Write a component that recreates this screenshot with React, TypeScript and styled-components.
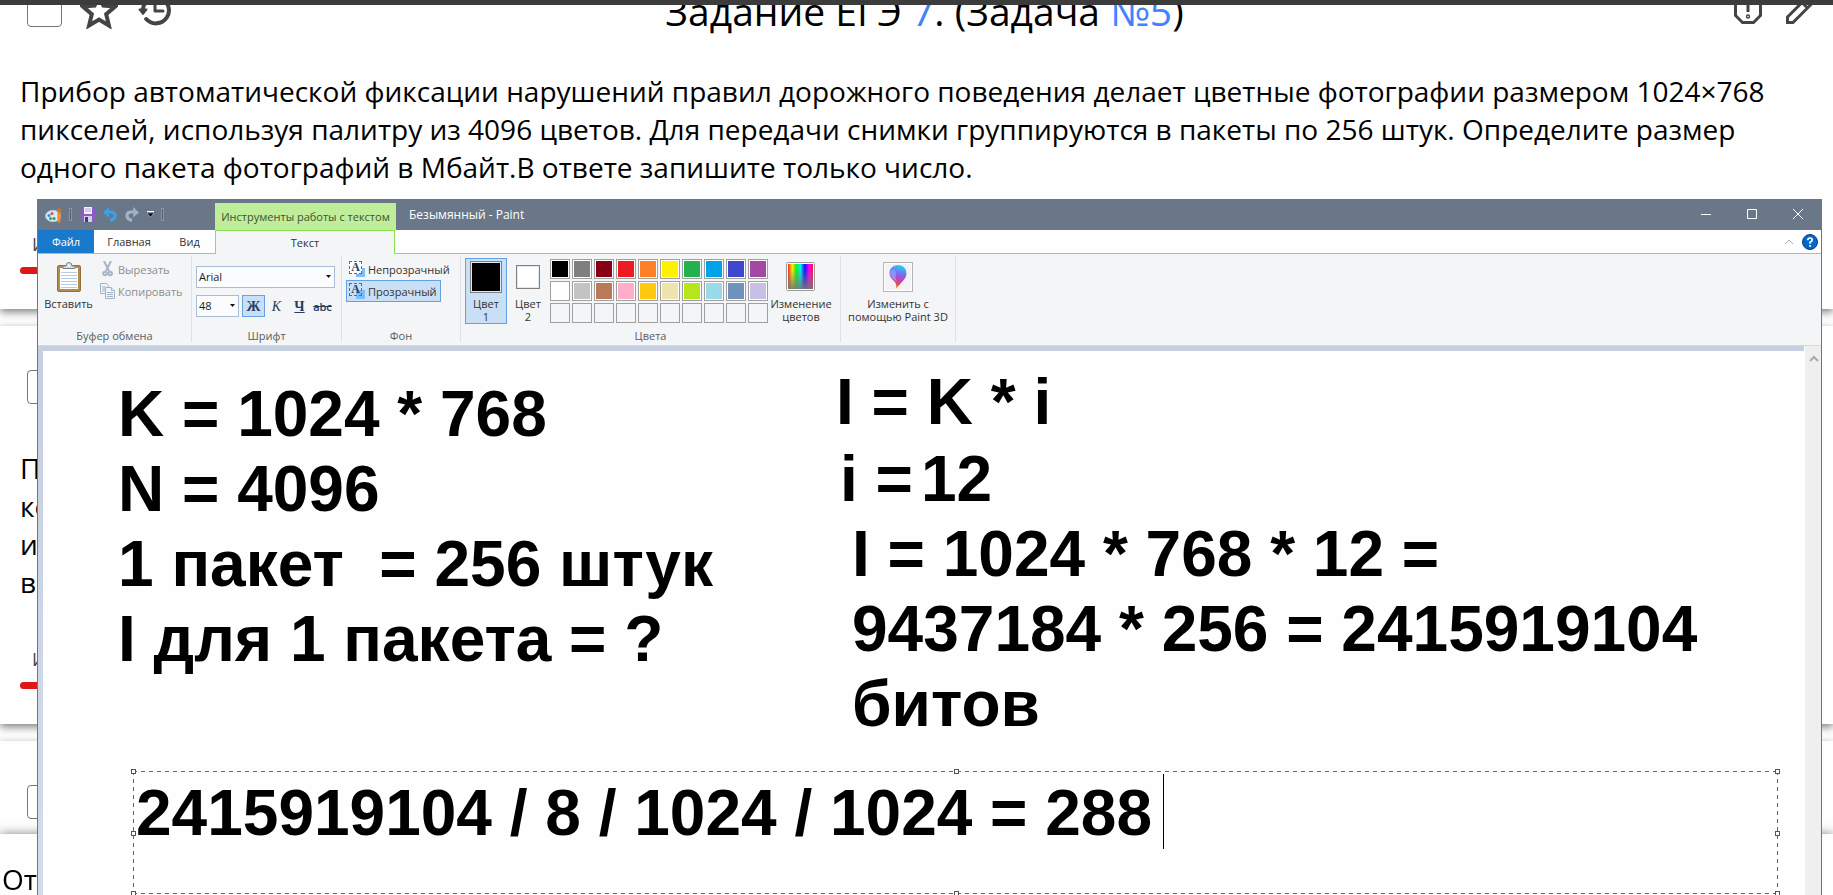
import React from "react";
import styled, { createGlobalStyle, css } from "styled-components";

const ui = `"Open Sans", "Noto Sans", sans-serif`;

const GlobalStyle = createGlobalStyle`
  * { box-sizing: border-box; }
  body { margin: 0; background: #fefefe; color: #000; font-family: ${ui}; }
  button { font: inherit; color: inherit; background: none; border: 0; padding: 0; margin: 0; }
  a { color: #4083ff; text-decoration: none; }
`;

/* ---------- exam page behind the window ---------- */

const Page = styled.main`
  position: relative;
  height: 100vh;
  overflow: hidden;
`;

const TopEdge = styled.div`
  position: fixed;
  inset: 0 0 auto 0;
  height: 5px;
  background: #3c3c3c;
`;

const Feed = styled.div`
  display: flex;
  flex-direction: column;
  gap: 17px;
  margin-top: -51px;
`;

const Card = styled.article`
  padding: 35px 20px;
  background: #fefefe;
  box-shadow: 0 3px 8px rgba(0, 0, 0, 0.5);
`;

const CardHeader = styled.header`
  display: grid;
  grid-template-columns: 1fr auto 1fr;
  align-items: center;
  height: 52px;
  color: #444;
`;

const HeaderTools = styled.div<{ $end?: boolean }>`
  display: flex;
  align-items: center;
  gap: ${(p) => (p.$end ? 20 : 18)}px;
  padding-left: 7px;
  justify-content: ${(p) => (p.$end ? "flex-end" : "flex-start")};
`;

const Check = styled.input`
  appearance: none;
  width: 35px;
  height: 34px;
  margin: 0;
  border: 1px solid #767676;
  border-radius: 4px;
  background: #fff;
`;

const IconButton = styled.button`
  display: flex;
`;

const Title = styled.h1`
  margin: 0;
  padding: 2px 0 0 16px;
  font-size: 39px;
  line-height: 48px;
  font-weight: 400;
  color: #000;
`;

const Question = styled.p`
  margin: 36px 0 46px;
  font-size: 28px;
  line-height: 38px;
`;

const Line = styled.span`
  display: block;
`;

const CardTab = styled.div`
  padding-left: 12px;
  font-size: 18px;
  line-height: 24px;
  font-weight: 500;
  color: #444;
`;

const RedBar = styled.div`
  width: 200px;
  height: 7px;
  margin-top: 11px;
  border-radius: 4px;
  background: #e01717;
`;

const AnswerBar = styled.footer`
  position: fixed;
  inset: auto 0 0 0;
  height: 61px;
  padding: 26px 2px 0;
  background: #fefefe;
  box-shadow: 0 0 10px rgba(0, 0, 0, 0.5);
  font-size: 28px;
  line-height: 38px;
`;

/* ---------- Paint window ---------- */

const Window = styled.section`
  position: fixed;
  inset: 199px 11px 0 37px;
  display: flex;
  flex-direction: column;
  border: 1px solid #697789;
  border-width: 0 1px;
  font-size: 11px;
  line-height: 13px;
  color: #333;
  background: #fefefe;
`;

const TitleBar = styled.div`
  display: flex;
  height: 31px;
  background: #697789;
  color: #fff;
`;

const QuickAccess = styled.div`
  display: flex;
  align-items: center;
  width: 177px;
  padding-left: 7px;
`;

const ContextTab = styled.div`
  display: flex;
  align-items: center;
  justify-content: center;
  width: 181px;
  margin-top: 4px;
  background: #bfed9a;
  color: #3d5230;
  white-space: nowrap;
`;

const Caption = styled.div`
  flex: 1;
  padding: 9px 0 0 13px;
  font-size: 12px;
`;

const WindowButton = styled.button`
  display: flex;
  align-items: center;
  justify-content: center;
  width: 46px;
  height: 30px;
`;

const Tabs = styled.div`
  display: flex;
  height: 24px;
  background: #fefefe;
`;

const Tab = styled.button<{ $w: number; $kind?: "file" | "active" }>`
  width: ${(p) => p.$w}px;
  border-bottom: 1px solid #86e34f;
  ${(p) =>
    p.$kind === "file" &&
    css`
      background: #1979ca;
      color: #fff;
    `}
  ${(p) =>
    p.$kind === "active" &&
    css`
      background: #f4f5f7;
      border: 1px solid #86e34f;
      border-bottom: 0;
    `}
`;

const TabsRest = styled.div`
  flex: 1;
  display: flex;
  align-items: center;
  justify-content: flex-end;
  gap: 8px;
  padding-right: 3px;
  border-bottom: 1px solid #86e34f;
`;

const Ribbon = styled.div`
  display: flex;
  height: 92px;
  padding: 2px 0 3px;
  background: #f4f5f7;
  border-bottom: 1px solid #d6d9dc;
`;

const Group = styled.div<{ $w: number }>`
  display: flex;
  flex-direction: column;
  width: ${(p) => p.$w}px;
  border-right: 1px solid #dfe1e4;
`;

const GroupBody = styled.div<{ $left?: number }>`
  display: flex;
  height: 73px;
  padding-left: ${(p) => p.$left ?? 0}px;
`;

const GroupLabel = styled.div`
  text-align: center;
  color: #5c5c5c;
`;

const BigButton = styled.button<{ $w: number }>`
  display: flex;
  flex-direction: column;
  align-items: center;
  gap: 5px;
  width: ${(p) => p.$w}px;
  padding-top: 6px;
  white-space: pre-line;
`;

const Rows = styled.div<{ $gap?: number; $top: number }>`
  display: flex;
  flex-direction: column;
  align-items: flex-start;
  gap: ${(p) => p.$gap ?? 0}px;
  padding-top: ${(p) => p.$top}px;
`;

const RowButton = styled.button<{ $muted?: boolean; $on?: boolean }>`
  display: flex;
  align-items: center;
  gap: 3px;
  height: 22px;
  padding: 0 3px 0 2px;
  border: 1px solid ${(p) => (p.$on ? "#62a2e4" : "transparent")};
  background: ${(p) => (p.$on ? "#c9dff5" : "transparent")};
  color: ${(p) => (p.$muted ? "#8d8d8d" : "#333")};
`;

const Row = styled.div`
  display: flex;
`;

const SelectBox = styled.label<{ $w: number }>`
  position: relative;
  width: ${(p) => p.$w}px;
  height: 22px;
  margin-right: 3px;
  svg {
    position: absolute;
    right: 4px;
    top: 9px;
    pointer-events: none;
  }
`;

const Select = styled.select`
  appearance: none;
  width: 100%;
  height: 100%;
  padding: 0 2px;
  border: 1px solid #abbdd4;
  border-radius: 0;
  background: #fbfcfe;
  color: #1c1c1c;
  font: 11px/20px ${ui};
`;

const StyleButton = styled.button<{ $on?: boolean; $look: string }>`
  width: 23px;
  height: 22px;
  border: 1px solid ${(p) => (p.$on ? "#62a2e4" : "transparent")};
  background: ${(p) => (p.$on ? "#c9dff5" : "transparent")};
  color: #27405f;
  font-family: "Liberation Serif", serif;
  font-size: 14px;
  ${(p) => p.$look === "bold" && css`font-weight: 700;`}
  ${(p) => p.$look === "italic" && css`font-style: italic;`}
  ${(p) => p.$look === "under" && css`text-decoration: underline; font-weight: 700;`}
  ${(p) =>
    p.$look === "strike" &&
    css`
      text-decoration: line-through;
      font-family: ${ui};
      font-size: 11px;
      font-weight: 600;
    `}
`;

const ColorButton = styled.button<{ $on?: boolean }>`
  display: flex;
  flex-direction: column;
  align-items: center;
  width: 42px;
  height: 66px;
  margin-top: 2px;
  border: 1px solid ${(p) => (p.$on ? "#62a2e4" : "transparent")};
  background: ${(p) => (p.$on ? "#c9dff5" : "transparent")};
`;

const SwatchSlot = styled.span`
  display: flex;
  align-items: center;
  height: 36px;
  margin-bottom: 2px;
`;

const BigSwatch = styled.span<{ $size: number; $color: string }>`
  width: ${(p) => p.$size}px;
  height: ${(p) => p.$size}px;
  border: 1px solid #808080;
  background: ${(p) => p.$color};
  box-shadow: inset 0 0 0 1px #dce9f7;
`;

const Palette = styled.div`
  display: grid;
  grid-template-columns: repeat(10, 20px);
  grid-auto-rows: 20px;
  gap: 2px;
  padding: 3px 0 0 1px;
`;

const Swatch = styled.button<{ $color?: string }>`
  border: 1px solid #a0a0a0;
  background: ${(p) => p.$color ?? "#f4f5f7"};
  box-shadow: inset 0 0 0 1px ${(p) => (p.$color ? "#fff" : "#f4f5f7")};
`;

const Workspace = styled.div`
  flex: 1;
  display: flex;
  min-height: 0;
  background: linear-gradient(#c6cfe0, #d2dceb);
`;

const Canvas = styled.div`
  position: relative;
  flex: 1;
  margin: 5px 0 0 5px;
  background: #fefefe;
  overflow: hidden;
  color: #000;
  font: 700 64px/75px "Liberation Sans", Arial, sans-serif;
`;

const ScrollTrack = styled.div`
  width: 17px;
  padding: 6px 0 0 4px;
  border-left: 1px solid #fff;
  background: #efefef;
`;

const CanvasText = styled.div<{ $x: number; $y: number }>`
  position: absolute;
  left: ${(p) => p.$x}px;
  top: ${(p) => p.$y}px;
  white-space: pre;
`;

const dash = (dir: string) =>
  `repeating-linear-gradient(${dir}, #0f7cd0 0 4px, transparent 4px 8px)`;

const TextFrame = styled.div`
  position: absolute;
  left: 90px;
  right: 26px;
  top: 420px;
  height: 123px;
  padding: 5px 3px 3px;
  background: ${dash("to right")} top / 100% 1px no-repeat,
    ${dash("to right")} bottom / 100% 1px no-repeat,
    ${dash("to bottom")} left / 1px 100% no-repeat,
    ${dash("to bottom")} right / 1px 100% no-repeat;
`;

const TextInput = styled.textarea`
  display: block;
  width: 100%;
  height: 100%;
  padding: 0;
  border: 0;
  outline: 0;
  resize: none;
  overflow: hidden;
  background: transparent;
  color: #000;
  font: inherit;
  white-space: pre;
`;

const Caret = styled.span`
  position: absolute;
  left: 1030px;
  top: 3px;
  width: 1px;
  height: 75px;
  background: #000;
`;

const Handle = styled.span<{ $h: number; $v: number }>`
  position: absolute;
  left: ${(p) => p.$h}%;
  top: ${(p) => p.$v}%;
  width: 5px;
  height: 5px;
  margin: -2px;
  border: 1px solid #555;
  background: #fff;
  ${(p) => p.$h === 100 && css`margin-left: -3px;`}
  ${(p) => p.$v === 100 && css`margin-top: -3px;`}
`;

/* ---------- icons ---------- */

const StarIcon = () => (
  <svg width="38" height="38" viewBox="0 0 38 38" fill="none" stroke="#444" strokeWidth="4">
    <path d="M19 4l4.400 10.600 11.600 1-8.800 7.600 2.700 11.300L19 28.500 9.100 34.500l2.700-11.300L3 15.600l11.600-1z" />
  </svg>
);

const HistoryIcon = () => (
  <svg width="36" height="36" viewBox="0 0 36 36" fill="none" stroke="#444" strokeWidth="4">
    <path d="M7 17a13 13 0 1 1 3.200 10" strokeLinecap="round" />
    <path d="M19 10v9h8" strokeLinecap="round" strokeLinejoin="round" strokeWidth="3" />
    <path d="M3.500 17.500h7L7 22z" fill="#444" strokeWidth="2" strokeLinejoin="round" />
  </svg>
);

const AlertIcon = () => (
  <svg width="30" height="30" viewBox="0 0 30 30" fill="none" stroke="#444" strokeWidth="3">
    <path d="M9.500 2.500h11l7 7v11l-7 7h-11l-7-7v-11z" />
    <path d="M15 8v9" />
    <circle cx="15" cy="21.500" r="0.700" />
  </svg>
);

const PencilIcon = () => (
  <svg width="30" height="30" viewBox="0 0 30 30" fill="none" stroke="#444" strokeWidth="3">
    <path d="M4.500 22L23 3.500l5.500 5.500L10 27.500H4.500zM19 7.500l5.500 5.500" />
  </svg>
);

const PaintIcon = () => (
  <svg width="18" height="18" viewBox="0 0 18 18">
    <ellipse cx="8" cy="10" rx="7.500" ry="5.800" fill="#d6e9f7" stroke="#9fc4de" />
    <circle cx="4" cy="9.500" r="1.500" fill="#3b8be0" />
    <circle cx="7" cy="7.500" r="1.500" fill="#e3493b" />
    <circle cx="5.500" cy="12.500" r="1.500" fill="#3aa655" />
    <circle cx="9" cy="12.500" r="1.600" fill="#39a935" />
    <path d="M12.500 6h3v9l-1.500 2.500L12.500 15z" fill="#ee8a2b" />
    <path d="M12 6l1-4.500 1.500 2L16 1v5z" fill="#b97a3f" />
  </svg>
);

const SaveIcon = () => (
  <svg width="14" height="15" viewBox="0 0 14 15">
    <path d="M0 0h14v15H0z" fill="#8c5bc7" />
    <path d="M3 0h8v7H3z" fill="#f4f0fa" />
    <path d="M3 9h8v6H3z" fill="#d8cfe8" />
    <path d="M4 10h3v5H4z" fill="#4b3a66" />
    <path d="M4 2h6M4 4h6" stroke="#b9a4dc" />
  </svg>
);

const CurlIcon = ({ color, flip }: { color: string; flip?: boolean }) => (
  <svg width="14" height="15" viewBox="0 0 14 15" fill="none">
    <g transform={flip ? "matrix(-1 0 0 1 14 0)" : undefined}>
      <path d="M3 5h5.500q4 .5 3.500 4.500-.8 3-5 4" stroke={color} strokeWidth="3" />
      <path d="M0 5.500L6 0v2.500L4.500 5.500 6 8v2.500z" fill={color} />
    </g>
  </svg>
);

const QuickSep = styled.span`
  width: 3px;
  height: 13px;
  border: 1px solid #8c98a7;
  background: #4f5b6b;
`;

const Slot = styled.span<{ $ml: number }>`
  display: flex;
  margin-left: ${(p) => p.$ml}px;
`;

const ClipboardIcon = () => (
  <svg width="24" height="30" viewBox="0 0 24 30">
    <rect x="0.500" y="3.500" width="23" height="26" rx="1.500" fill="#b58a4c" stroke="#96703a" />
    <path d="M3 6h18v21H3z" fill="#fff" />
    <path d="M4 10.500h16M4 13.500h16M4 16.500h16M4 19.500h16M4 22.500h16M4 25.500h16" stroke="#b3cbe0" />
    <path d="M6 6.500V4h3q0-3.500 3-3.500T15 4h3v2.500z" fill="#d9dcdf" stroke="#7d848b" />
    <circle cx="12" cy="3.500" r="1" fill="#fff" />
  </svg>
);

const ScissorsIcon = () => (
  <svg width="15" height="16" viewBox="0 0 15 16" fill="none" stroke="#a6b4c5">
    <path d="M4 0l5 10M11 0L6 10" strokeWidth="2" />
    <circle cx="5" cy="12.500" r="1.800" strokeWidth="2" />
    <circle cx="10.200" cy="12.500" r="1.800" strokeWidth="2" />
  </svg>
);

const CopyIcon = () => (
  <svg width="15" height="16" viewBox="0 0 15 16" fill="#f1f5fa" stroke="#a3b4c8">
    <path d="M.5.500h6l2 2v8h-8z" />
    <path d="M2 4h4M2 6h4M2 8h4" />
    <path d="M5.500 4.500h6l3 3v8h-9z" />
    <path d="M7 9.500h6M7 11.500h6M7 13.500h6M11.500 4.500v3h3" />
  </svg>
);

const LetterTile = styled.span<{ $clear?: boolean }>`
  position: relative;
  width: 16px;
  height: 16px;
  background: linear-gradient(#7dbdfa, #7dbdfa) right bottom / 9px 9px no-repeat;
  span {
    position: absolute;
    left: 0;
    top: 0;
    width: 13px;
    height: 13px;
    border: 1px dashed #3577b0;
    background: ${(p) => (p.$clear ? "transparent" : "#fff")};
    color: #27405f;
    font: 700 12px/11px "Liberation Serif", serif;
    text-align: center;
  }
`;

const DropIcon = () => (
  <svg width="5" height="3" viewBox="0 0 5 3">
    <path d="M0 0h5L2.500 3z" fill="#111" />
  </svg>
);

const SpectrumIcon = () => (
  <svg width="30" height="30" viewBox="0 0 30 30">
    <defs>
      <linearGradient id="hue">
        <stop offset="0" stopColor="#f22" />
        <stop offset="0.170" stopColor="#fe0" />
        <stop offset="0.330" stopColor="#1e2" />
        <stop offset="0.500" stopColor="#0ee" />
        <stop offset="0.670" stopColor="#11f" />
        <stop offset="0.850" stopColor="#f0e" />
        <stop offset="1" stopColor="#f13" />
      </linearGradient>
      <linearGradient id="fade" x2="0" y2="1">
        <stop offset="0.200" stopColor="#777" stopOpacity="0" />
        <stop offset="1" stopColor="#777" stopOpacity="0.900" />
      </linearGradient>
    </defs>
    <rect x="0.500" y="0.500" width="28" height="28" rx="1" fill="#fff" stroke="#999" />
    <path d="M2 2h25v25H2z" fill="url(#hue)" />
    <path d="M2 2h25v25H2z" fill="url(#fade)" />
  </svg>
);

const Paint3DIcon = () => (
  <svg width="30" height="30" viewBox="0 0 30 30">
    <defs>
      <linearGradient id="drop" x1="0.600" y1="0" x2="0.400" y2="1">
        <stop offset="0" stopColor="#20d5f0" />
        <stop offset="0.350" stopColor="#7b6cf0" />
        <stop offset="0.600" stopColor="#c145b5" />
        <stop offset="0.800" stopColor="#ee4550" />
        <stop offset="1" stopColor="#ffc20e" />
      </linearGradient>
    </defs>
    <rect x="0.500" y="0.500" width="29" height="29" fill="#fff" stroke="#b5b5b5" />
    <path d="M2 2h26v26H2z" fill="#f3f3f3" />
    <path d="M15 3c5 0 8.500 3.500 8.500 8.500 0 6-6 9-10.500 15.500.5-4 .2-6-2.500-8.500S6.500 14 6.500 11.500C6.500 6.500 10 3 15 3z" fill="url(#drop)" />
    <path d="M7 10c2-4 6-3 6 1s-1 5 1 8c-4-1-7.500-5-7-9z" fill="#8fa8ff" opacity="0.700" />
  </svg>
);

const HelpIcon = () => (
  <svg width="16" height="16" viewBox="0 0 16 16" fill="none">
    <circle cx="8" cy="8" r="7.500" fill="#0668c8" stroke="#0b3f78" />
    <path d="M5.800 6.300Q5.800 4 8 4t2.200 2Q10.200 7.300 8 8.300V9.800" stroke="#fff" strokeWidth="1.700" />
    <path d="M7.100 11h1.800v1.700H7.100z" fill="#fff" />
  </svg>
);

const ChevronUp = ({ w }: { w: number }) => (
  <svg width="10" height="8" viewBox="0 0 10 8" fill="none" stroke="#aaa" strokeWidth={w}>
    <path d="M1 6l4-4 4 4" />
  </svg>
);

const COLORS: (string | undefined)[] = [
  "#000000", "#7f7f7f", "#880015", "#ed1c24", "#ff7f27", "#fff200", "#22b14c", "#00a2e8", "#3f48cc", "#a349a4",
  "#ffffff", "#c3c3c3", "#b97a57", "#ffaec9", "#ffc90e", "#efe4b0", "#b5e61d", "#99d9ea", "#7092be", "#c8bfe7",
  ...Array<undefined>(10).fill(undefined),
];

const HANDLES = [
  [0, 0], [50, 0], [100, 0], [0, 50], [100, 50], [0, 100], [50, 100], [100, 100],
];

export default function App() {
  return (
    <Page>
      <GlobalStyle />
      <Feed>
        <Card>
          <CardHeader>
            <HeaderTools>
              <Check type="checkbox" aria-label="Выбрать задание" />
              <IconButton aria-label="В избранное"><StarIcon /></IconButton>
              <IconButton aria-label="История"><HistoryIcon /></IconButton>
            </HeaderTools>
            <Title>
              Задание ЕГЭ <a href="#task">7</a>. (Задача <a href="#item">№5</a>)
            </Title>
            <HeaderTools $end>
              <IconButton aria-label="Сообщить об ошибке"><AlertIcon /></IconButton>
              <IconButton aria-label="Изменить"><PencilIcon /></IconButton>
            </HeaderTools>
          </CardHeader>
          <Question>
            Прибор автоматической фиксации нарушений правил дорожного поведения делает цветные фотографии
            размером 1024×768 пикселей, используя палитру из 4096 цветов. Для передачи снимки группируются в
            пакеты по 256 штук. Определите размер одного пакета фотографий в Мбайт.В ответе запишите только
            число.
          </Question>
          <CardTab>И</CardTab>
          <RedBar />
        </Card>
        <Card>
          <CardHeader>
            <HeaderTools><Check type="checkbox" aria-label="Выбрать задание" /></HeaderTools>
          </CardHeader>
          <Question>
            <Line>П</Line>
            <Line>ко</Line>
            <Line>и</Line>
            <Line>в</Line>
          </Question>
          <CardTab>И</CardTab>
          <RedBar />
        </Card>
        <Card>
          <CardHeader>
            <HeaderTools><Check type="checkbox" aria-label="Выбрать задание" /></HeaderTools>
          </CardHeader>
        </Card>
      </Feed>
      <AnswerBar>От</AnswerBar>
      <TopEdge />

      <Window aria-label="Безымянный - Paint">
        <TitleBar>
          <QuickAccess>
            <PaintIcon />
            <Slot $ml={6}><QuickSep /></Slot>
            <Slot $ml={9}><SaveIcon /></Slot>
            <Slot $ml={8}><CurlIcon color="#36a3ee" /></Slot>
            <Slot $ml={8}><CurlIcon color="#a3b3c6" flip /></Slot>
            <Slot $ml={8}>
              <svg width="7" height="7" viewBox="0 0 7 7">
                <path d="M0 .5h7" stroke="#fff" />
                <path d="M0 2h7L3.500 6z" fill="#000" stroke="#dfe4ea" strokeWidth="0.500" />
              </svg>
            </Slot>
            <Slot $ml={7}><QuickSep /></Slot>
          </QuickAccess>
          <ContextTab>Инструменты работы с текстом</ContextTab>
          <Caption>Безымянный - Paint</Caption>
          <WindowButton aria-label="Свернуть">
            <svg width="10" height="10"><path d="M0 5.500h10" stroke="#fff" /></svg>
          </WindowButton>
          <WindowButton aria-label="Развернуть">
            <svg width="10" height="10" fill="none"><path d="M.5.500h9v9h-9z" stroke="#fff" /></svg>
          </WindowButton>
          <WindowButton aria-label="Закрыть">
            <svg width="10" height="10" fill="none"><path d="M0 0l10 10M10 0L0 10" stroke="#fff" /></svg>
          </WindowButton>
        </TitleBar>

        <Tabs>
          <Tab $w={56} $kind="file">Файл</Tab>
          <Tab $w={70}>Главная</Tab>
          <Tab $w={51}>Вид</Tab>
          <Tab $w={180} $kind="active">Текст</Tab>
          <TabsRest>
            <ChevronUp w={1} />
            <IconButton aria-label="Справка"><HelpIcon /></IconButton>
          </TabsRest>
        </Tabs>

        <Ribbon>
          <Group $w={154}>
            <GroupBody $left={2}>
              <BigButton $w={57}><ClipboardIcon />Вставить</BigButton>
              <Rows $top={2}>
                <RowButton $muted><ScissorsIcon />Вырезать</RowButton>
                <RowButton $muted><CopyIcon />Копировать</RowButton>
              </Rows>
            </GroupBody>
            <GroupLabel>Буфер обмена</GroupLabel>
          </Group>
          <Group $w={150}>
            <GroupBody $left={4}>
              <Rows $top={10} $gap={7}>
                <SelectBox $w={139}>
                  <Select aria-label="Шрифт"><option>Arial</option></Select>
                  <DropIcon />
                </SelectBox>
                <Row>
                  <SelectBox $w={43}>
                    <Select aria-label="Размер"><option>48</option></Select>
                    <DropIcon />
                  </SelectBox>
                  <StyleButton $look="bold" $on>Ж</StyleButton>
                  <StyleButton $look="italic">К</StyleButton>
                  <StyleButton $look="under">Ч</StyleButton>
                  <StyleButton $look="strike">abc</StyleButton>
                </Row>
              </Rows>
            </GroupBody>
            <GroupLabel>Шрифт</GroupLabel>
          </Group>
          <Group $w={119}>
            <GroupBody $left={4}>
              <Rows $top={2}>
                <RowButton><LetterTile><span>A</span></LetterTile>Непрозрачный</RowButton>
                <RowButton $on><LetterTile $clear><span>A</span></LetterTile>Прозрачный</RowButton>
              </Rows>
            </GroupBody>
            <GroupLabel>Фон</GroupLabel>
          </Group>
          <Group $w={380}>
            <GroupBody $left={4}>
              <ColorButton $on>
                <SwatchSlot><BigSwatch $size={32} $color="#000" /></SwatchSlot>
                Цвет<br />1
              </ColorButton>
              <ColorButton>
                <SwatchSlot><BigSwatch $size={24} $color="#fff" /></SwatchSlot>
                Цвет<br />2
              </ColorButton>
              <Palette>
                {COLORS.map((c, i) => (
                  <Swatch key={i} $color={c} aria-label={c ?? "Пусто"} />
                ))}
              </Palette>
              <BigButton $w={66}><SpectrumIcon />{"Изменение\nцветов"}</BigButton>
            </GroupBody>
            <GroupLabel>Цвета</GroupLabel>
          </Group>
          <Group $w={115}>
            <GroupBody>
              <BigButton $w={114}><Paint3DIcon />{"Изменить с\nпомощью Paint 3D"}</BigButton>
            </GroupBody>
          </Group>
        </Ribbon>

        <Workspace>
          <Canvas>
            <CanvasText $x={75} $y={26}>
              {"K = 1024 * 768\nN = 4096\n1 пакет  = 256 штук\nI для 1 пакета = ?"}
            </CanvasText>
            <CanvasText $x={793} $y={14}>I = K * i</CanvasText>
            <CanvasText $x={797} $y={91}>i =</CanvasText>
            <CanvasText $x={878} $y={91}>12</CanvasText>
            <CanvasText $x={809} $y={166}>
              {"I = 1024 * 768 * 12 =\n9437184 * 256 = 2415919104\nбитов"}
            </CanvasText>
            <TextFrame>
              <TextInput aria-label="Текст" defaultValue="2415919104 / 8 / 1024 / 1024 = 288" spellCheck={false} />
              <Caret />
              {HANDLES.map(([h, v]) => (
                <Handle key={`${h}-${v}`} $h={h} $v={v} />
              ))}
            </TextFrame>
          </Canvas>
          <ScrollTrack><ChevronUp w={2} /></ScrollTrack>
        </Workspace>
      </Window>
    </Page>
  );
}
